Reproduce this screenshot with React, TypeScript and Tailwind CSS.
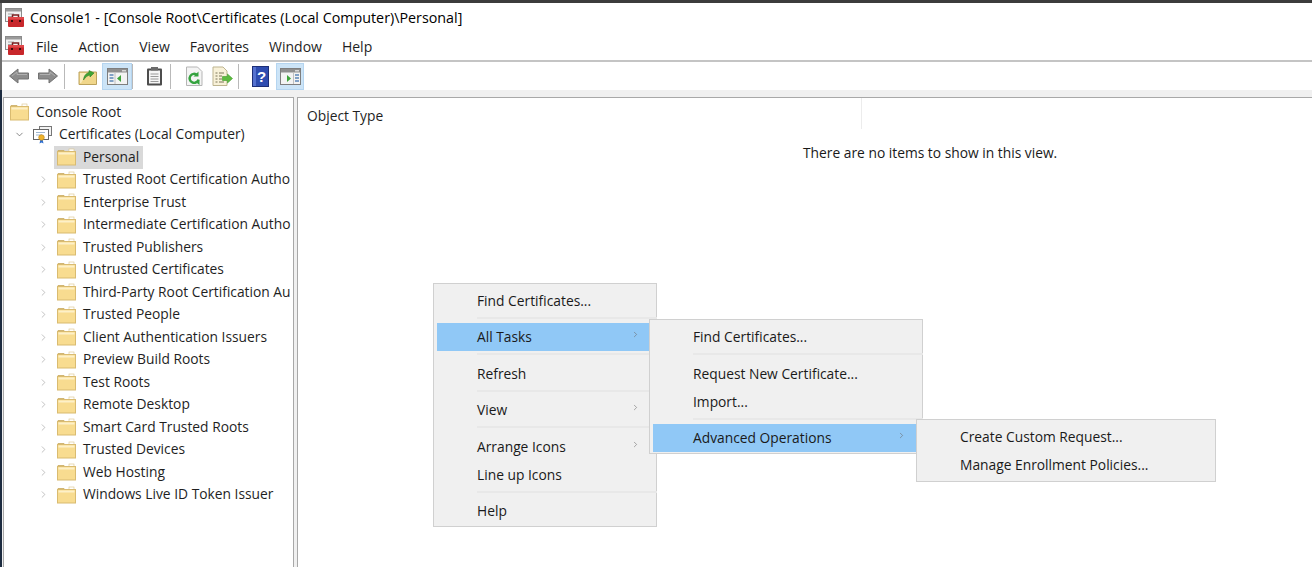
import { ChevronDown, ChevronRight } from "lucide-react";

const FONT = "[font-family:'Open_Sans','Noto_Sans',sans-serif]";

// long names are cut by the pane edge in the screenshot
const TREE = [
  "Trusted Root Certification Autho",
  "Enterprise Trust",
  "Intermediate Certification Autho",
  "Trusted Publishers",
  "Untrusted Certificates",
  "Third-Party Root Certification Au",
  "Trusted People",
  "Client Authentication Issuers",
  "Preview Build Roots",
  "Test Roots",
  "Remote Desktop",
  "Smart Card Trusted Roots",
  "Trusted Devices",
  "Web Hosting",
  "Windows Live ID Token Issuer",
];

function Folder() {
  return (
    <svg width="19" height="18" viewBox="0 0 19 18" className="shrink-0">
      <path d="M1 4.500V2.500h6l1.500 2z" fill="#e2c67f" stroke="#c9ab62" strokeWidth="0.8" />
      <rect x="12" y="1" width="5" height="2.500" fill="#fff" stroke="#d9c48a" strokeWidth="0.6" />
      <rect x="0.500" y="3.500" width="18" height="13.500" fill="#f8dc90" stroke="#d9bb70" />
      <rect x="1.500" y="4.500" width="16" height="2" fill="#fdf0c8" />
    </svg>
  );
}

function ToolboxIcon() {
  return (
    <svg width="20" height="20" viewBox="0 0 20 20" className="shrink-0">
      <rect x="0.500" y="0.500" width="16" height="13" fill="#f1f1f1" stroke="#8b8b8b" />
      <rect x="1" y="1" width="15" height="2.500" fill="#9a9a9a" />
      <path d="M3 6h6M3 8.500h4M3 11h5" stroke="#a5a5a5" />
      <path d="M7.500 9V7h6v2" fill="none" stroke="#7a1f1f" strokeWidth="1.500" />
      <rect x="3" y="9" width="16" height="10" rx="1" fill="#c8272b" />
      <rect x="3" y="9" width="16" height="2.500" fill="#e0484a" />
      <rect x="6" y="12" width="2" height="2" fill="#3a0c0c" />
      <rect x="14" y="12" width="2" height="2" fill="#3a0c0c" />
    </svg>
  );
}

function CertIcon() {
  return (
    <svg width="20" height="18" viewBox="0 0 20 18" className="shrink-0">
      <rect x="6.500" y="0.500" width="12" height="9" fill="#f3f3f3" stroke="#777" />
      <rect x="0.500" y="3.500" width="15" height="10" fill="#fff" stroke="#666" />
      <path d="M3 6.500h9M3 9h6" stroke="#9fb6cf" />
      <path d="M7.500 13l-1 4.500 2-1 2 1-1-4.500z" fill="#2f6fd0" />
      <circle cx="8.500" cy="11.500" r="2.800" fill="#eeb32c" stroke="#b9811a" strokeWidth="0.6" />
    </svg>
  );
}

function Arrow({ flip }: { flip?: boolean }) {
  return (
    <svg width="22" height="18" viewBox="0 0 22 18" className={flip ? "-scale-x-100" : ""}>
      <path d="M1.500 9L10 2v4h10.500v6H10v4z" fill="#8c8c8c" stroke="#727272" strokeLinejoin="round" />
      <path d="M4 9l5-4v2.500h10" fill="none" stroke="#b0b0b0" />
    </svg>
  );
}

function UpFolder() {
  return (
    <svg width="20" height="20" viewBox="0 0 20 20">
      <path d="M1 6h17.500v12.500H1z" fill="#f0d68a" stroke="#bca25c" />
      <path d="M2 7h7l-6 10H2z" fill="#f9eabb" />
      <path d="M5.500 14C6 9.500 8 7.500 11 6.500V4.500l5 2.500-4 4V9C9.500 9.500 7.500 11 5.500 14z" fill="#3fa535" stroke="#2a7d25" strokeWidth="0.6" />
    </svg>
  );
}

function PaneIcon({ right }: { right?: boolean }) {
  return (
    <svg width="21" height="19" viewBox="0 0 21 19">
      <rect x="0.500" y="1.500" width="20" height="16" fill="#f3f3f3" stroke="#7e7e7e" />
      <rect x="1" y="2" width="19" height="3.500" fill="#8f8f8f" />
      <rect x="15" y="3" width="4" height="1.500" fill="#d8d8d8" />
      {right ? (
        <>
          <path d="M7 8v7l4-3.500z" fill="#3da33a" />
          <path d="M15 8h4M15 11h4M15 14h4" stroke="#5c86b8" strokeWidth="1.500" />
          <path d="M13.500 6v11" stroke="#c0c0c0" />
        </>
      ) : (
        <>
          <path d="M14 8v7l-4-3.500z" fill="#3da33a" />
          <path d="M2.500 8h4M2.500 11h4M2.500 14h4" stroke="#5c86b8" strokeWidth="1.500" />
          <path d="M8 6v11" stroke="#c0c0c0" />
        </>
      )}
    </svg>
  );
}

function Clipboard() {
  return (
    <svg width="17" height="20" viewBox="0 0 17 20">
      <rect x="1" y="2.500" width="15" height="17" rx="1" fill="#4d4d4d" />
      <rect x="3" y="4.500" width="11" height="13" fill="#f5f5f5" />
      <rect x="5" y="1" width="7" height="3.500" fill="#6b6b6b" />
      <path d="M4.500 8h8M4.500 10.500h8M4.500 13h8M4.500 15.500h8" stroke="#9a9a9a" />
    </svg>
  );
}

function RefreshDoc() {
  return (
    <svg width="19" height="20" viewBox="0 0 19 20">
      <path d="M1.500 1h11l4.500 4.500v14H1.500z" fill="#f4f4f4" stroke="#b5b5b5" />
      <path d="M13.500 13.500a4.500 4.500 0 1 1-1.300-4.500" fill="none" stroke="#35a33f" strokeWidth="2.400" />
      <path d="M13.500 5.500v5h-5z" fill="#35a33f" />
      <path d="M10 15.500l4.500 3.500v-5z" fill="#35a33f" />
    </svg>
  );
}

function ExportDoc() {
  return (
    <svg width="21" height="20" viewBox="0 0 21 20">
      <path d="M1 1h10l4 4v14.500H1z" fill="#f8f1d8" stroke="#bdb48f" />
      <path d="M3.500 7h2M7 7h5M3.500 10h2M7 10h3M3.500 13h2M7 13h3M3.500 16h2M7 16h5" stroke="#7b7558" />
      <path d="M10.500 10.500h5V8l5 4.500-5 4.500v-2.500h-5z" fill="#5dbb3f" stroke="#3f9a2c" strokeWidth="0.6" />
    </svg>
  );
}

function HelpBook() {
  return (
    <svg width="17" height="21" viewBox="0 0 17 21">
      <rect x="0.500" y="0.500" width="16" height="20" fill="#2f4db0" stroke="#1d2f78" />
      <path d="M1 1h3v19H1z" fill="#5672cf" />
      <text x="9.500" y="16" textAnchor="middle" fontSize="15" fontWeight="700" fill="#fff" fontFamily="Liberation Sans, sans-serif">?</text>
    </svg>
  );
}

function Sep() {
  return <div className="w-px h-[25px] bg-[#b9b9b9]" />;
}

function MenuItem({ label, active, arrow, w }: { label: string; active?: boolean; arrow?: boolean; w: string }) {
  return (
    <div className={`h-7 flex items-center justify-between pl-10 pr-2.5 ${active ? "bg-[#90c8f6]" : ""} ${w}`}>
      <span className="text-[#1a1a1a] pt-px">{label}</span>
      {arrow && <ChevronRight size={9} strokeWidth={1.5} className="text-[#6a6a6a] -mt-1.5" />}
    </div>
  );
}

function MenuSep({ h = "h-2" }: { h?: string }) {
  return (
    <div className={`${h} ml-10 -mr-1 pt-0.5`}>
      <div className="h-0.5 bg-[#e8e8e8]" />
    </div>
  );
}

export default function App() {
  return (
    <div className={`relative w-[1312px] h-[567px] overflow-hidden bg-[#f0f0f0] text-[13.800px] text-[#1f1f1f] ${FONT}`}>
      <div className="h-[3px] bg-[#3c3c3c]" />
      <div className="flex">
        <div className="w-[2px] shrink-0 flex flex-col">
          <div className="h-[87px] bg-[#6e6e6e]" />
          <div className="flex-1 bg-[#1c2b3f]" />
        </div>
        <div className="flex-1 min-w-0">
          <div className="h-[29px] bg-white flex items-center gap-[5px] pl-[3px] text-[14.300px] text-black">
            <ToolboxIcon />
            <span>Console1 - [Console Root\Certificates (Local Computer)\Personal]</span>
          </div>
          <div className="h-7 bg-white flex items-center pl-[3px] text-[14px]">
            <ToolboxIcon />
            <div className="flex gap-[20px] ml-[11px]">
              <span>File</span>
              <span>Action</span>
              <span>View</span>
              <span>Favorites</span>
              <span>Window</span>
              <span>Help</span>
            </div>
          </div>
          <div className="h-0.5 bg-[#c4c4c4]" />
          <div className="h-7 bg-white flex items-center pl-[6px]">
            <Arrow />
            <div className="w-[7px]" />
            <Arrow flip />
            <div className="w-[5px]" />
            <Sep />
            <div className="w-[13px]" />
            <UpFolder />
            <div className="w-[4px]" />
            <div className="w-[30px] h-[27px] flex items-center justify-center bg-[#cce4f7] border border-[#b5d5f0]">
              <PaneIcon />
            </div>
            <Sep />
            <div className="w-[13px]" />
            <Clipboard />
            <div className="w-[7px]" />
            <Sep />
            <div className="w-[14px]" />
            <RefreshDoc />
            <div className="w-[8px]" />
            <ExportDoc />
            <div className="w-[5px]" />
            <Sep />
            <div className="w-[13px]" />
            <HelpBook />
            <div className="w-[7px]" />
            <div className="w-[28px] h-[27px] flex items-center justify-center bg-[#cce4f7] border border-[#b5d5f0]">
              <PaneIcon right />
            </div>
          </div>
          <div className="h-[7px] bg-[#f0f0f0]" />

          <div className="flex h-[470px] gap-[3px] pl-px">
            <div className="w-[291px] bg-white border border-[#a8a8a8] border-b-0 overflow-hidden pt-[3px]">
              <div className="h-[22.500px] flex items-center gap-[7px] pl-[6px] whitespace-nowrap">
                <Folder />
                <span>Console Root</span>
              </div>
              <div className="h-[22.500px] flex items-center whitespace-nowrap pl-[10px]">
                <ChevronDown size={11} strokeWidth={1.5} className="text-[#555] shrink-0" />
                <div className="w-[8px] shrink-0" />
                <CertIcon />
                <span className="ml-[6px]">Certificates (Local Computer)</span>
              </div>
              <div className="h-[22.500px] flex items-center pl-[50px] whitespace-nowrap">
                <div className="flex items-center gap-[7px] h-full bg-[#d9d9d9] pl-[3px] pr-1">
                  <Folder />
                  <span>Personal</span>
                </div>
              </div>
              {TREE.map((t) => (
                <div key={t} className="h-[22.500px] flex items-center pl-[34px] whitespace-nowrap">
                  <ChevronRight size={11} strokeWidth={1.5} className="text-[#a6a6a6] shrink-0" />
                  <div className="w-[8px] shrink-0" />
                  <Folder />
                  <span className="ml-[7px]">{t}</span>
                </div>
              ))}
            </div>
            <div className="flex-1 bg-white border border-[#a8a8a8] border-r-0 border-b-0">
              <div className="h-[31px] w-[564px] flex items-center pl-[9px] pt-[5px] border-r border-[#ececec]">Object Type</div>
              <div className="pl-[505px] pt-[14px] text-[#1a1a1a]">There are no items to show in this view.</div>
            </div>
          </div>
        </div>
      </div>

      {/* context menus */}
      <div className="absolute left-[433px] top-[283px] w-[224px] h-[244px] bg-[#f0f0f0] border border-[#d0d0d0] p-[3px]">
        <MenuItem label="Find Certificates..." w="w-[213px]" />
        <MenuSep />
        <MenuItem label="All Tasks" active arrow w="w-[213px]" />
        <MenuSep h="h-[9px]" />
        <MenuItem label="Refresh" w="w-[213px]" />
        <MenuSep />
        <MenuItem label="View" arrow w="w-[213px]" />
        <MenuSep h="h-[9px]" />
        <MenuItem label="Arrange Icons" arrow w="w-[213px]" />
        <MenuItem label="Line up Icons" w="w-[213px]" />
        <MenuSep />
        <MenuItem label="Help" w="w-[213px]" />
      </div>
      <div className="absolute left-[649px] top-[319px] w-[274px] h-[135px] bg-[#f0f0f0] border border-[#d0d0d0] p-[3px]">
        <MenuItem label="Find Certificates..." w="w-[263px]" />
        <MenuSep h="h-[9px]" />
        <MenuItem label="Request New Certificate..." w="w-[263px]" />
        <MenuItem label="Import..." w="w-[263px]" />
        <MenuSep />
        <MenuItem label="Advanced Operations" active arrow w="w-[263px]" />
      </div>
      <div className="absolute left-[916px] top-[419px] w-[300px] h-[63px] bg-[#f0f0f0] border border-[#d0d0d0] p-[3px]">
        <MenuItem label="Create Custom Request..." w="w-[290px]" />
        <MenuItem label="Manage Enrollment Policies..." w="w-[290px]" />
      </div>
    </div>
  );
}
